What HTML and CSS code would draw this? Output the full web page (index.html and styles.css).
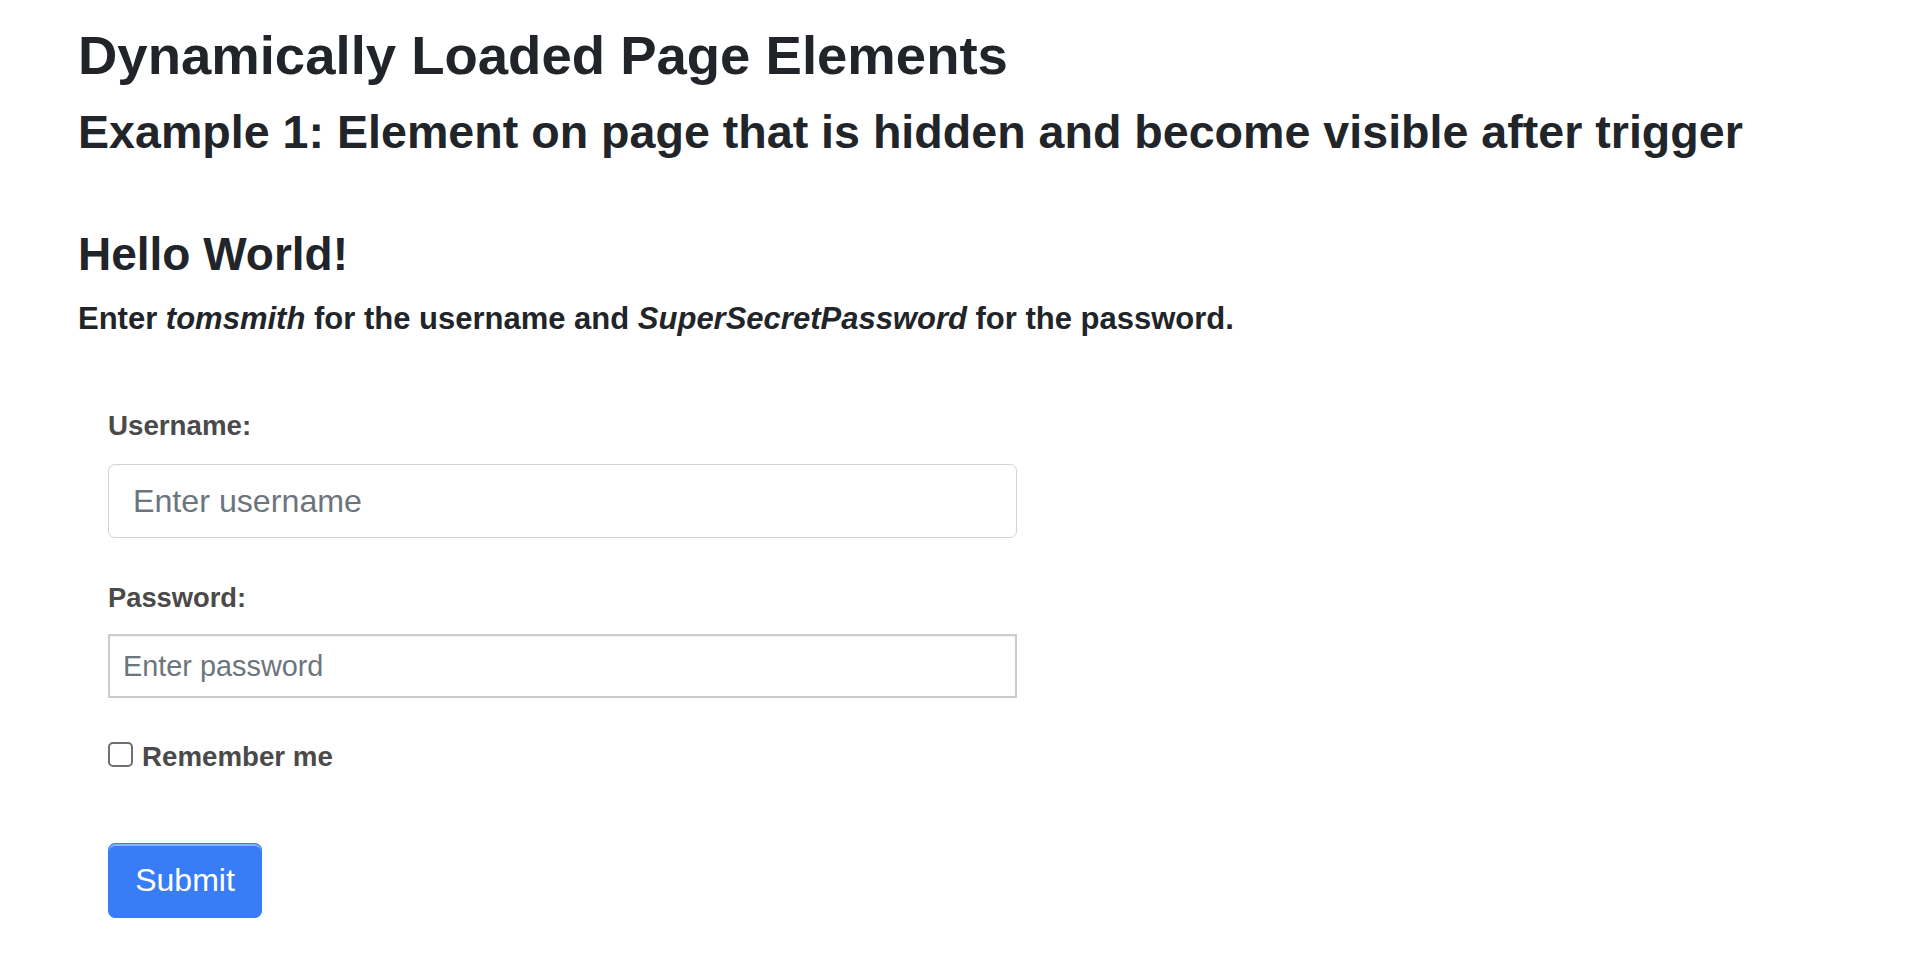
FILE: index.html
```html
<!DOCTYPE html>
<html lang="en">
<head>
<meta charset="utf-8">
<title>Dynamically Loaded Page Elements</title>
<link rel="stylesheet" href="styles.css">
</head>
<body>
<div class="page">
  <h1 class="title">Dynamically Loaded Page Elements</h1>
  <h2 class="subtitle">Example 1: Element on page that is hidden and become visible after trigger</h2>
  <h3 class="hello">Hello World!</h3>
  <p class="hint">Enter <em>tomsmith</em> for the username and <em>SuperSecretPassword</em> for the password.</p>
  <form class="login">
    <label class="field-label field-label-user" for="username">Username:</label>
    <input class="input-rounded" id="username" type="text" placeholder="Enter username">
    <label class="field-label field-label-pw" for="password">Password:</label>
    <input class="input-plain" id="password" type="password" placeholder="Enter password">
    <label class="remember">
      <input class="check" type="checkbox">
      <span>Remember me</span>
    </label>
    <button class="submit" type="button">Submit</button>
  </form>
</div>
</body>
</html>
```
FILE: styles.css
```css
html, body {
  margin: 0;
  padding: 0;
  background: #ffffff;
}

body {
  font-family: "Liberation Sans", Arial, Helvetica, sans-serif;
  color: #212529;
}

.page {
  padding: 24px 0 0 78px;
  display: flex;
  flex-direction: column;
  align-items: flex-start;
}

.title {
  margin: 0;
  font-size: 54.5px;
  line-height: 64px;
  font-weight: 700;
}

.subtitle {
  margin: 16px 0 0 0;
  font-size: 46.6px;
  line-height: 56px;
  font-weight: 700;
}

.hello {
  margin: 66px 0 0 0;
  font-size: 46px;
  line-height: 56px;
  font-weight: 700;
}

.hint {
  margin: 17px 0 0 0;
  font-size: 31px;
  line-height: 40px;
  font-weight: 700;
}

.hint em {
  font-style: italic;
}

.login {
  margin: 69px 0 0 30px;
  display: flex;
  flex-direction: column;
  align-items: flex-start;
}

.field-label {
  font-size: 27.3px;
  line-height: 36px;
  font-weight: 700;
  color: #4a4a4a;
}

.field-label-user {
  font-size: 27.7px;
}

.field-label-pw {
  margin-top: 42px;
}

.input-rounded {
  box-sizing: border-box;
  margin-top: 20px;
  width: 909px;
  height: 74px;
  padding: 0 0 0 24px;
  border: 1px solid #ced4da;
  border-radius: 7px;
  font-family: "Liberation Sans", Arial, Helvetica, sans-serif;
  font-size: 32.2px;
  color: #495057;
  background: #ffffff;
  outline: none;
}

.input-plain {
  box-sizing: border-box;
  margin-top: 18px;
  width: 909px;
  height: 64px;
  padding: 0 0 0 13px;
  border: 2px solid #cccccc;
  border-radius: 0;
  box-shadow: inset 0 1px 2px rgba(0, 0, 0, 0.07);
  font-family: "Liberation Sans", Arial, Helvetica, sans-serif;
  font-size: 28.85px;
  color: #495057;
  background: #ffffff;
  outline: none;
}

.input-rounded::placeholder,
.input-plain::placeholder {
  color: #6c757d;
  opacity: 1;
}

.remember {
  margin-top: 41px;
  display: flex;
  align-items: flex-start;
  gap: 9px;
  font-size: 27.7px;
  line-height: 36px;
  font-weight: 700;
  color: #4a4a4a;
}

.check {
  -webkit-appearance: none;
  appearance: none;
  box-sizing: border-box;
  margin: 3px 0 0 0;
  width: 25px;
  height: 25px;
  border: 2px solid #6f6f6f;
  border-radius: 5px;
  background: #ffffff;
}

.submit {
  box-sizing: border-box;
  margin-top: 68px;
  width: 154px;
  height: 75px;
  padding: 0;
  border: 1px solid #387df5;
  border-radius: 7px;
  background: #387df5;
  box-shadow: inset 0 2px 0 rgba(255, 255, 255, 0.4);
  color: #ffffff;
  font-family: "Liberation Sans", Arial, Helvetica, sans-serif;
  font-size: 32px;
  font-weight: 400;
  cursor: pointer;
}
```
